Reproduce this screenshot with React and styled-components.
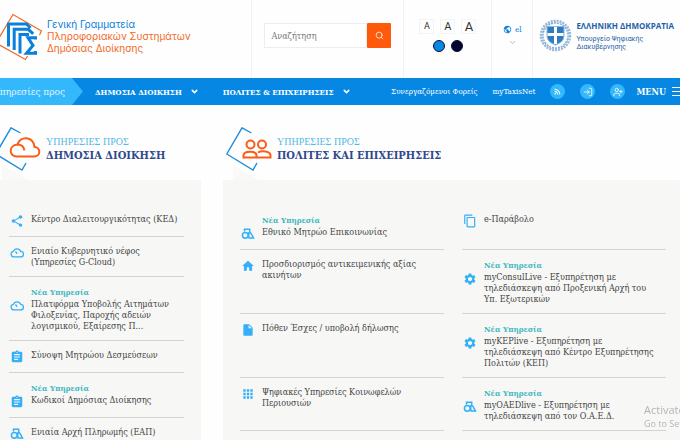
import React from "react";
import styled, { createGlobalStyle } from "styled-components";
import {
  MdApps,
  MdAssignment,
  MdContentCopy,
  MdHome,
  MdInsertDriveFile,
  MdPublic,
  MdRssFeed,
  MdSettings,
  MdShare,
} from "react-icons/md";
import { ChevronDown, LogIn, Search, UserPlus } from "lucide-react";

const slab = `"DejaVu Serif Condensed", "DejaVu Serif", serif`;
const sans = `"Open Sans", "Noto Sans", sans-serif`;

const publicServices = [
  { icon: "share", text: "Κέντρο Διαλειτουργικότητας (ΚΕΔ)" },
  { icon: "cloud", text: "Ενιαίο Κυβερνητικό νέφος (Υπηρεσίες G-Cloud)" },
  {
    icon: "cloud",
    isNew: true,
    text: "Πλατφόρμα Υποβολής Αιτημάτων Φιλοξενίας, Παροχής αδειών λογισμικού, Εξαίρεσης Π...",
  },
  { icon: "clipboard", text: "Σύνοψη Μητρώου Δεσμεύσεων" },
  { icon: "clipboard", isNew: true, text: "Κωδικοί Δημόσιας Διοίκησης" },
  { icon: "shapes", text: "Ενιαία Αρχή Πληρωμής (ΕΑΠ)" },
];

const citizenServices = [
  { icon: "shapes", isNew: true, text: "Εθνικό Μητρώο Επικοινωνίας" },
  { icon: "copy", text: "e-Παράβολο" },
  { icon: "home", text: "Προσδιορισμός αντικειμενικής αξίας ακινήτων" },
  {
    icon: "settings",
    isNew: true,
    text: "myConsulLive - Εξυπηρέτηση με τηλεδιάσκεψη από Προξενική Αρχή του Υπ. Εξωτερικών",
  },
  { icon: "file", text: "Πόθεν Έσχες / υποβολή δήλωσης" },
  {
    icon: "settings",
    isNew: true,
    text: "myKEPlive - Εξυπηρέτηση με τηλεδιάσκεψη από Κέντρο Εξυπηρέτησης Πολιτών (ΚΕΠ)",
  },
  { icon: "apps", text: "Ψηφιακές Υπηρεσίες Κοινωφελών Περιουσιών" },
  {
    icon: "shapes",
    isNew: true,
    text: "myOAEDlive - Εξυπηρέτηση με τηλεδιάσκεψη από τον Ο.Α.Ε.Δ.",
  },
];

const CloudIcon = () => (
  <svg viewBox="0 0 25 24" width="14" height="14" fill="none" stroke="currentColor" strokeWidth="2.200">
    <path d="M7 19a5 5 0 0 1-1-9.900a7 7 0 0 1 13-.1a5 5 0 0 1 0 10zM9 10q3 0 3.500 3.500" />
  </svg>
);

const ShapesIcon = () => (
  <svg viewBox="0 0 14 14" width="14" height="14" fill="none" stroke="currentColor" strokeWidth="1.500">
    <path d="M3.500 4.500V2.200h5.200V6" />
    <circle cx="4.300" cy="8.300" r="2.900" />
    <path d="M7.500 6h2.200l2.800 5H8z" />
  </svg>
);

const icons = {
  share: <MdShare size={14} />,
  cloud: <CloudIcon />,
  clipboard: <MdAssignment size={14} />,
  shapes: <ShapesIcon />,
  copy: <MdContentCopy size={14} />,
  home: <MdHome size={14} />,
  settings: <MdSettings size={14} />,
  file: <MdInsertDriveFile size={14} />,
  apps: <MdApps size={14} />,
};

const GsisLogo = () => (
  <svg width="43" height="50" viewBox="0 0 43 50" fill="none">
    <path d="M39.500 24l2-4L13 3.500-4 32l29.500 16.500 2-3.500" stroke="#f26a28" strokeWidth="1.200" />
    <g stroke="#0a7fdc" strokeWidth="3">
      <path d="M8.500 35.500V13H26.500l4 4" />
      <path d="M14.200 39V18.300h14l5 4.500" />
      <path d="M20 42.500V23.500h9" />
      <path d="M35.500 28.500V26.800H28l5 7.700-6.500 7.800h9V40" />
    </g>
  </svg>
);

const Emblem = () => (
  <svg width="33" height="33" viewBox="0 0 33 33" fill="none" stroke="#2d74b8">
    <circle cx="16.500" cy="16.500" r="14.500" strokeWidth="2.600" strokeDasharray="2 1" opacity="0.500" />
    <circle cx="16.500" cy="16.500" r="12.500" strokeWidth="1.400" strokeDasharray="2 1" opacity="0.600" />
    <path d="M8 7.500h17V17q0 6-8.500 9Q8 23 8 17z" fill="#2d7cc4" stroke="#8fb8dc" />
    <path d="M16.500 8v17M8.500 15.500h16" stroke="#fff" strokeWidth="3" />
  </svg>
);

const GlobalStyle = createGlobalStyle`
  * {
    box-sizing: border-box;
  }
  body {
    margin: 0;
    overflow-x: hidden;
    background: #fefefe;
    color: #444;
    font-family: ${slab};
    font-size: 9px;
    scrollbar-width: none;
  }
  a {
    color: inherit;
    text-decoration: none;
  }
  button {
    padding: 0;
    border: 0;
    background: none;
    color: inherit;
    font: inherit;
    cursor: pointer;
  }
  h2, p, ul {
    margin: 0;
    padding: 0;
  }
  svg {
    display: block;
    flex-shrink: 0;
  }
`;

const Header = styled.header`
  display: flex;
  height: 78px;
`;

const HeaderCell = styled.div`
  display: flex;
  flex-direction: ${(p) => (p.$column ? "column" : "row")};
  align-items: center;
  justify-content: ${(p) => (p.$column ? "center" : "flex-start")};
  flex: ${(p) => p.$grow || "none"};
  gap: ${(p) => p.$gap || 0}px;
  padding: 0 ${(p) => p.$pad || 0}px 7px;
  border-left: ${(p) => (p.$line ? "1px solid #f3f3f3" : "0")};
`;

const Brand = styled.a`
  display: flex;
  align-items: center;
  gap: 4px;
  color: #f26a28;
  font: 10px/12px Inter, sans-serif;
  white-space: nowrap;
`;

const BrandLine = styled.span`
  display: block;
  color: ${(p) => (p.$blue ? "#0a7fdc" : "inherit")};
`;

const SearchForm = styled.form`
  display: flex;
  width: 127px;
`;

const SearchInput = styled.input`
  flex: 1;
  min-width: 0;
  height: 25px;
  padding: 0 6px;
  border: 1px solid #ededed;
  background: #fff;
  font: 9px ${slab};
  &::placeholder {
    color: #777;
    opacity: 1;
  }
`;

const SearchButton = styled.button`
  display: grid;
  place-items: center;
  width: 24px;
  height: 25px;
  border-radius: 1px;
  background: #ff5a0c;
  color: #fff;
`;

const ControlRow = styled.div`
  display: flex;
  gap: ${(p) => p.$gap}px;
`;

const SizeButton = styled.button`
  width: 15px;
  height: 15px;
  border: 1px solid #f3f3f3;
  color: #333;
  font: ${(p) => p.$size}px/13px Roboto, sans-serif;
`;

const ThemeButton = styled.button`
  width: 12px;
  height: 12px;
  border: 1px solid #07103c;
  border-radius: 50%;
  background: ${(p) => p.$color};
`;

const Language = styled.button`
  display: flex;
  flex-wrap: wrap;
  justify-content: center;
  align-items: center;
  gap: 3px;
  width: 24px;
  color: #0a7fdc;
  font-size: 8px;
  line-height: 10px;
`;

const Ministry = styled.div`
  color: #1f62a8;
  font: 7px/8px Roboto, sans-serif;
  white-space: nowrap;
  strong {
    display: block;
    margin-bottom: 4px;
    font: bold 8px/11px ${sans};
  }
`;

const Nav = styled.nav`
  display: flex;
  align-items: center;
  height: 27px;
  background: #0687e3;
  color: #fff;
  font-size: 8px;
  white-space: nowrap;
`;

const NavLabel = styled.span`
  display: flex;
  justify-content: flex-end;
  width: 83px;
  padding-right: 18px;
  overflow: hidden;
  background: #33b8fc;
  font: 10px/27px ${slab};
  color: #e3f5ff;
  clip-path: polygon(0 0, 72px 0, 100% 50%, 72px 100%, 0 100%);
`;

const NavMenu = styled.button`
  display: flex;
  align-items: center;
  gap: 8px;
  margin-left: ${(p) => p.$space}px;
  font-weight: bold;
`;

const MenuButton = styled.button`
  display: flex;
  align-items: center;
  gap: 6px;
  margin-left: -4px;
  font-size: 9px;
  font-weight: bold;
`;

const NavEnd = styled.div`
  display: flex;
  align-items: center;
  gap: 15px;
  margin-left: auto;
`;

const RoundLink = styled.a`
  display: grid;
  place-items: center;
  width: 15px;
  height: 15px;
  border-radius: 50%;
  background: #33b8fc;
`;

const Main = styled.main`
  display: grid;
  grid-template-columns: 201px 1fr;
  gap: 22px;
`;

const SectionHead = styled.div`
  display: flex;
  align-items: flex-start;
  gap: 2px;
  height: 75px;
  padding-top: 22px;
  margin-left: ${(p) => p.$shift}px;
  overflow: hidden;
  white-space: nowrap;
`;

const SectionTitle = styled.h2`
  padding-top: 8px;
  color: #30498c;
  font-size: 11px;
  line-height: 15px;
`;

const Kicker = styled.span`
  display: block;
  color: #55b9e4;
  font: 10px/13px "Liberation Serif", serif;
`;

const Panel = styled.div`
  padding: 25px ${(p) => p.$right}px 0 ${(p) => p.$left}px;
  background: #f7f7f6;
`;

const ServiceList = styled.ul`
  display: grid;
  grid-template-columns: ${(p) => (p.$columns === 2 ? "1fr 1fr" : "1fr")};
  column-gap: 18px;
  padding-bottom: 20px;
  list-style: none;
`;

const ServiceItem = styled.li`
  padding: 9px 0 8px 1px;
  border-bottom: 1px solid #d3d3d3;
`;

const NewTag = styled.span`
  display: block;
  padding-left: 21px;
  color: #3fb8bd;
  font-size: 8px;
  font-weight: bold;
  line-height: 13px;
`;

const ServiceLink = styled.a`
  display: flex;
  align-items: flex-start;
  gap: 7px;
  padding-right: 6px;
  color: #444;
  line-height: 11px;
  svg {
    color: #33b0f8;
  }
`;

const Watermark = styled.aside`
  position: fixed;
  right: 0;
  bottom: 10px;
  width: 36px;
  overflow: hidden;
  color: #b4b4b4;
  font: 9px/13px ${sans};
  white-space: nowrap;
  p:first-child {
    font-size: 11px;
    line-height: 15px;
  }
`;

function Services({ items, columns }) {
  return (
    <ServiceList $columns={columns}>
      {items.map((item) => (
        <ServiceItem key={item.text}>
          {item.isNew && <NewTag>Νέα Υπηρεσία</NewTag>}
          <ServiceLink href="#">
            {icons[item.icon]}
            <span>{item.text}</span>
          </ServiceLink>
        </ServiceItem>
      ))}
    </ServiceList>
  );
}

function HeadIcon({ children }) {
  return (
    <svg width="49" height="53" viewBox="0 0 49 53" fill="none">
      <path d="M7 38v15h26z" fill="#f9f9f9" />
      <path d="M25.500 6L16 .8.800 27 27 43l4-7" stroke="#1f8fdd" strokeWidth="1.400" />
      <g stroke="#fb5d17" strokeWidth="2">
        {children}
      </g>
    </svg>
  );
}

export default function App() {
  return (
    <>
      <GlobalStyle />
      <Header>
        <HeaderCell $grow="1">
          <Brand href="#">
            <GsisLogo />
            <span>
              <BrandLine $blue>Γενική Γραμματεία</BrandLine>
              <BrandLine>Πληροφοριακών Συστημάτων</BrandLine>
              <BrandLine>Δημόσιας Διοίκησης</BrandLine>
            </span>
          </Brand>
        </HeaderCell>
        <HeaderCell $line $pad={12}>
          <SearchForm onSubmit={(e) => e.preventDefault()}>
            <SearchInput type="search" placeholder="Αναζήτηση" aria-label="Αναζήτηση" />
            <SearchButton aria-label="Αναζήτηση">
              <Search size={9} />
            </SearchButton>
          </SearchForm>
        </HeaderCell>
        <HeaderCell $line $column $gap={6} $pad={15}>
          <ControlRow $gap={6}>
            <SizeButton $size={9}>A</SizeButton>
            <SizeButton $size={11}>A</SizeButton>
            <SizeButton $size={13}>A</SizeButton>
          </ControlRow>
          <ControlRow $gap={6}>
            <ThemeButton $color="#0687e3" aria-label="Μπλε" />
            <ThemeButton $color="#02052f" aria-label="Σκούρο" />
          </ControlRow>
        </HeaderCell>
        <HeaderCell $line $column $pad={8}>
          <Language>
            <MdPublic size={9} />
            el
            <ChevronDown size={9} color="#aaa" />
          </Language>
        </HeaderCell>
        <HeaderCell $line $gap={4} $pad={6}>
          <Emblem />
          <Ministry>
            <strong>ΕΛΛΗΝΙΚΗ ΔΗΜΟΚΡΑΤΙΑ</strong>
            Υπουργείο Ψηφιακής
            <br />
            Διακυβέρνησης
          </Ministry>
        </HeaderCell>
      </Header>

      <Nav>
        <NavLabel>Υπηρεσίες προς</NavLabel>
        <NavMenu $space={12}>
          ΔΗΜΟΣΙΑ ΔΙΟΙΚΗΣΗ
          <ChevronDown size={9} strokeWidth={4} />
        </NavMenu>
        <NavMenu $space={24}>
          ΠΟΛΙΤΕΣ & ΕΠΙΧΕΙΡΗΣΕΙΣ
          <ChevronDown size={9} strokeWidth={4} />
        </NavMenu>
        <NavEnd>
          <a href="#">Συνεργαζόμενοι Φορείς</a>
          <a href="#">myTaxisNet</a>
          <RoundLink href="#" aria-label="RSS">
            <MdRssFeed size={9} />
          </RoundLink>
          <RoundLink href="#" aria-label="Σύνδεση">
            <LogIn size={10} />
          </RoundLink>
          <RoundLink href="#" aria-label="Εγγραφή">
            <UserPlus size={10} />
          </RoundLink>
          <MenuButton>
            MENU
            <svg width="8" height="11" viewBox="0 0 8 11" stroke="#fff">
              <path d="M0 1.500h8M0 5.500h8M0 9.500h8" />
            </svg>
          </MenuButton>
        </NavEnd>
      </Nav>

      <Main>
        <section>
          <SectionHead $shift={-5}>
            <HeadIcon>
              <path
                transform="translate(0 2)"
                d="M22 27.500h17c7 0 7-9 .5-9.500C38 6.500 25 7 22.500 15.500c-9 .5-9 12-.5 12zM22.500 15.500q6 0 7 6"
              />
            </HeadIcon>
            <SectionTitle>
              <Kicker>ΥΠΗΡΕΣΙΕΣ ΠΡΟΣ</Kicker>
              ΔΗΜΟΣΙΑ ΔΙΟΙΚΗΣΗ
            </SectionTitle>
          </SectionHead>
          <Panel $left={9} $right={17}>
            <Services items={publicServices} />
          </Panel>
        </section>
        <section>
          <SectionHead $shift={3}>
            <HeadIcon>
              <circle cx="24.500" cy="17.500" r="4" />
              <circle cx="36" cy="17.500" r="4" />
              <path d="M17.500 30.500v-2c0-5 13-5 13 0v2zM30.500 30.500H44.500v-2c0-4.500-9-5-12.500-3" />
            </HeadIcon>
            <SectionTitle>
              <Kicker>ΥΠΗΡΕΣΙΕΣ ΠΡΟΣ</Kicker>
              ΠΟΛΙΤΕΣ ΚΑΙ ΕΠΙΧΕΙΡΗΣΕΙΣ
            </SectionTitle>
          </SectionHead>
          <Panel $left={17} $right={14}>
            <Services items={citizenServices} columns={2} />
          </Panel>
        </section>
      </Main>

      <Watermark>
        <p>Activate</p>
        <p>Go to Set</p>
      </Watermark>
    </>
  );
}
